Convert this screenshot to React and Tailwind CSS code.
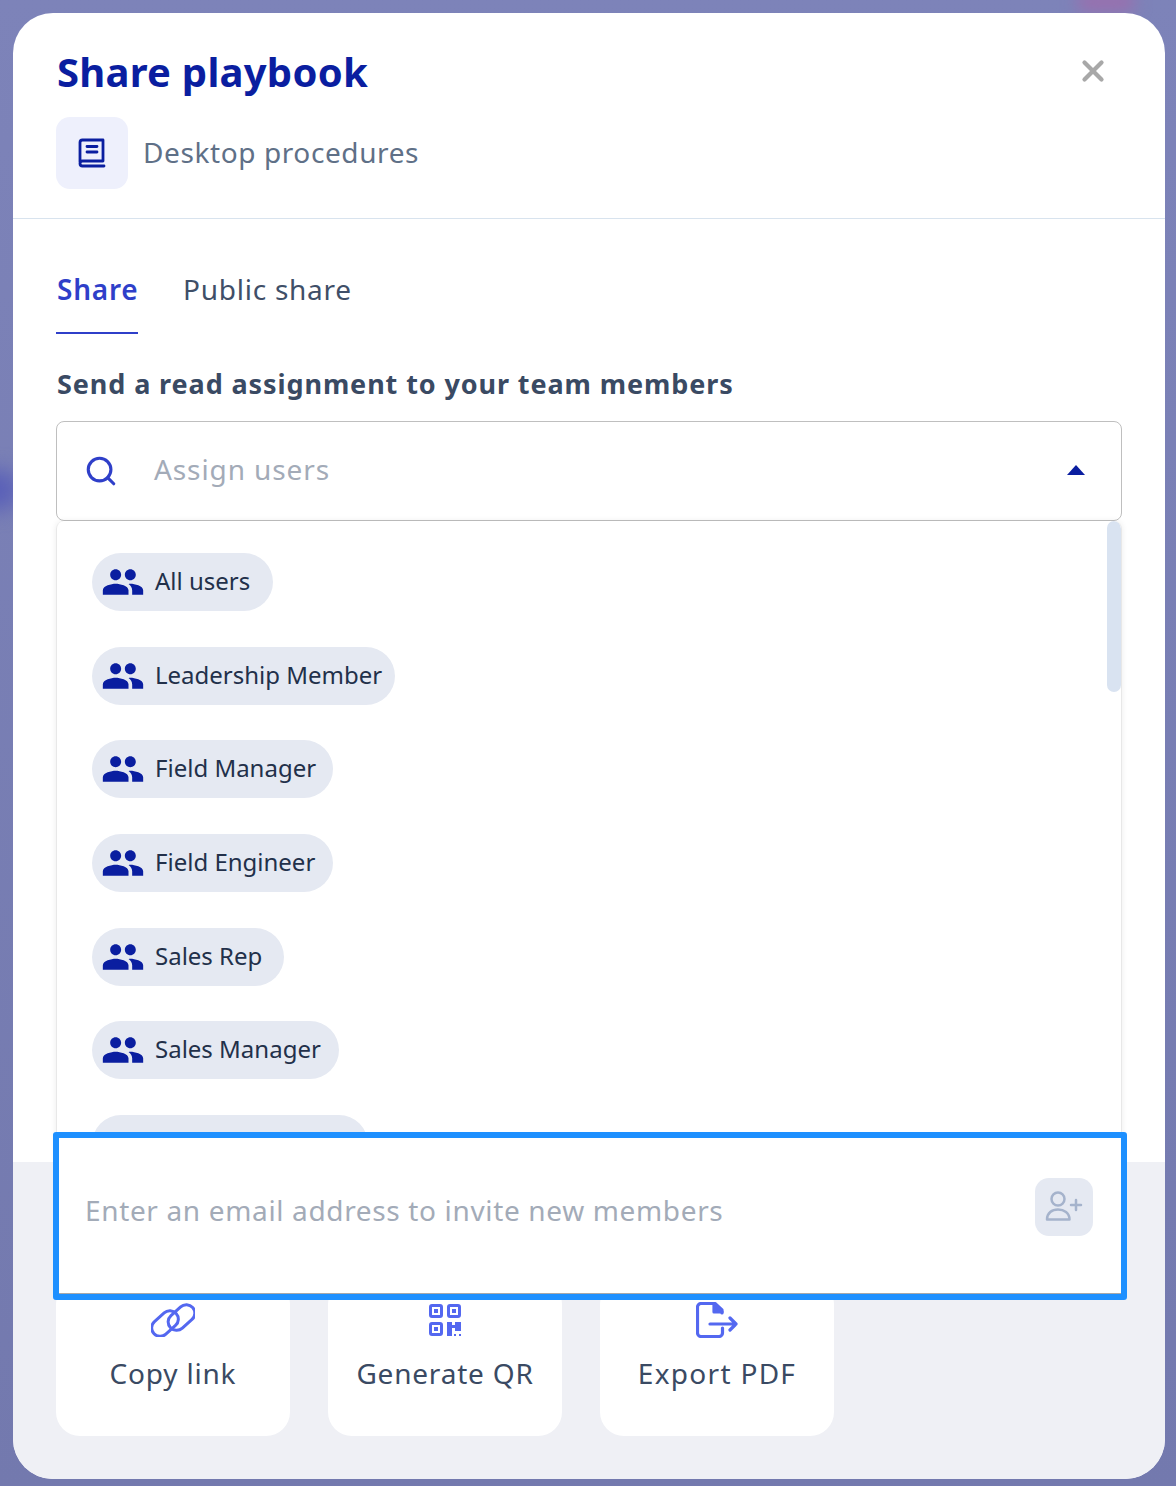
import { Search, X } from "lucide-react";

const font = { fontFamily: '"Noto Sans", sans-serif' };

const groups = [
  { name: "All users", width: "w-[181px]" },
  { name: "Leadership Member", width: "w-[303px]" },
  { name: "Field Manager", width: "w-[241px]" },
  { name: "Field Engineer", width: "w-[241px]" },
  { name: "Sales Rep", width: "w-[192px]" },
  { name: "Sales Manager", width: "w-[247px]" },
];

function PeopleIcon() {
  return (
    <svg width="44" height="44" viewBox="0 0 24 24" fill="#0a1ea0" className="shrink-0">
      <path d="M16 11c1.66 0 2.99-1.34 2.99-3S17.66 5 16 5c-1.66 0-3 1.34-3 3s1.34 3 3 3zm-8 0c1.66 0 2.99-1.34 2.99-3S9.66 5 8 5C6.34 5 5 6.34 5 8s1.34 3 3 3zm0 2c-2.33 0-7 1.17-7 3.5V19h14v-2.5c0-2.33-4.67-3.5-7-3.5zm8 0c-.29 0-.62.02-.97.05 1.16.84 1.97 1.97 1.97 3.45V19h6v-2.5c0-2.33-4.67-3.5-7-3.5z" />
    </svg>
  );
}

function BookIcon() {
  return (
    <svg width="28" height="30" viewBox="0 0 28 30" fill="none" stroke="#0a1ea0" strokeWidth="2.8" strokeLinejoin="round" strokeLinecap="round">
      <path d="M2 24V4.500A2.500 2.500 0 0 1 4.500 2H25v21H4.500A2.500 2.500 0 0 0 2 25.500 2.500 2.500 0 0 0 4.500 28H26" />
      <path d="M9 8.500h10M9 14h10" />
    </svg>
  );
}

function LinkIcon() {
  return (
    <svg width="44" height="34" viewBox="0 0 44 34" fill="none" stroke="#5468f0" strokeWidth="3">
      <rect x="-1" y="12" width="30" height="17" rx="8.500" transform="rotate(-42 14 20.500)" />
      <rect x="15.500" y="6" width="30" height="17" rx="8.500" transform="rotate(-42 30.500 14.500)" />
    </svg>
  );
}

function QrIcon() {
  return (
    <svg width="32" height="32" viewBox="0 0 32 32" fill="#5468f0">
      <path fillRule="evenodd" d="M3 0h8a3 3 0 0 1 3 3v8a3 3 0 0 1-3 3H3a3 3 0 0 1-3-3V3a3 3 0 0 1 3-3zm0 3v8h8V3zM21 0h8a3 3 0 0 1 3 3v8a3 3 0 0 1-3 3h-8a3 3 0 0 1-3-3V3a3 3 0 0 1 3-3zm0 3v8h8V3zM3 18h8a3 3 0 0 1 3 3v8a3 3 0 0 1-3 3H3a3 3 0 0 1-3-3v-8a3 3 0 0 1 3-3zm0 3v8h8v-8z" />
      <rect x="5" y="5" width="4" height="4" />
      <rect x="23" y="5" width="4" height="4" />
      <rect x="5" y="23" width="4" height="4" />
      <path d="M18 18h5v3h3v-3h6v9h-6v-3h-3v8h-5z" />
      <rect x="25" y="30" width="2" height="2" />
      <rect x="30" y="30" width="2" height="2" />
    </svg>
  );
}

function ExportIcon() {
  return (
    <svg width="42" height="36" viewBox="0 0 42 36" fill="none" stroke="#5468f0" strokeWidth="3.200" strokeLinecap="round" strokeLinejoin="round">
      <path d="M26 11V8l-7-6.500H5A3.500 3.500 0 0 0 1.500 5v26A3.500 3.500 0 0 0 5 34.500h18a3.500 3.500 0 0 0 3.500-3.500v-5" />
      <path d="M18 2v8h8z" fill="#5468f0" />
      <path d="M14 22h26M34 16l6 6-6 6" />
    </svg>
  );
}

function InviteIcon() {
  return (
    <svg width="38" height="38" viewBox="0 0 38 38" fill="none" stroke="#a5b3cc" strokeWidth="2.500" strokeLinecap="round" strokeLinejoin="round">
      <circle cx="13" cy="11" r="6.500" />
      <path d="M2 31.500c0-6.500 5-10 11-10s11.500 3.500 11.500 10z" />
      <path d="M26 17h10M31 12v10" />
    </svg>
  );
}

function ActionCard({ icon, label, spacing }) {
  return (
    <button className="flex h-[156px] w-[234px] flex-col items-center justify-end rounded-[24px] bg-white pb-[42px]">
      <span className="mb-[14px] flex h-[40px] items-center">{icon}</span>
      <span className={`-translate-y-[1px] text-[28px] leading-[40px] text-[#3a4a63] ${spacing}`}>{label}</span>
    </button>
  );
}

export default function App() {
  return (
    <div className="relative h-[1486px] w-[1176px] overflow-hidden bg-gradient-to-b from-[#7d83b9] to-[#7379ae] p-[13px] pb-[7px]" style={font}>
      <div className="absolute left-[-30px] top-[470px] h-[40px] w-[50px] rounded-full bg-[#5a60b8] blur-[10px]" />
      <div className="absolute right-[40px] top-[-8px] h-[20px] w-[60px] rounded-full bg-[#9a6fae] blur-[8px]" />
      <div className="relative flex h-[1466px] w-[1152px] flex-col overflow-hidden rounded-[40px] bg-white">
        <header className="flex h-[206px] shrink-0 flex-col border-b border-[#d8e3ee] pl-[43px] pr-[55px] pt-[30px]">
          <div className="flex h-[58px] items-start justify-between">
            <h1 className="pl-[1px] text-[40px] font-bold leading-[58px] tracking-[0.25px] text-[#0a1ea0]">Share playbook</h1>
            <X size={34} strokeWidth={3} className="mt-[11px] text-[#a8a8a8]" />
          </div>
          <div className="mt-[16px] flex items-center gap-[15px]">
            <div className="flex h-[72px] w-[72px] items-center justify-center rounded-[14px] bg-[#eef0fc]">
              <BookIcon />
            </div>
            <span className="-translate-y-[1px] text-[28px] leading-[40px] tracking-[0.6px] text-[#5f7087]">Desktop procedures</span>
          </div>
        </header>

        <div className="flex min-h-0 flex-1 flex-col px-[43px]">
          <nav className="mt-[46px] flex h-[69px] shrink-0 gap-[45px]">
            <div className="h-[69px] w-[82px] border-b-2 border-[#2f3fc9] pl-[1px] text-[28px] font-semibold leading-[49px] tracking-[0.75px] text-[#2f3fc9]">Share</div>
            <div className="text-[28px] leading-[49px] tracking-[0.75px] text-[#3f4f68]">Public share</div>
          </nav>
          <h2 className="mt-[31px] pl-[1px] text-[27px] font-bold leading-[38px] tracking-[0.9px] text-[#3a4a63]">Send a read assignment to your team members</h2>
          <div className="mt-[18px] flex h-[100px] shrink-0 items-center rounded-[8px] border border-[#bfbfbf] pl-[27px] pr-[36px]">
            <Search size={34} strokeWidth={2.2} className="shrink-0 text-[#2f3fc9]" />
            <span className="ml-[36px] flex-1 -translate-y-[2px] text-[28px] tracking-[0.9px] text-[#a3abb8]">Assign users</span>
            <span className="h-0 w-0 -translate-y-[1px] border-x-[9px] border-b-[10px] border-x-transparent border-b-[#0a1ea0]" />
          </div>
          <div className="relative flex min-h-0 flex-1 flex-col gap-[35.670px] overflow-hidden rounded-t-[8px] border-x border-[#e8e8e8] pl-[35px] pt-[32px] shadow-[0_0_6px_rgba(0,0,0,0.08)]">
            {groups.map((group) => (
              <div key={group.name} className={`flex h-[58px] shrink-0 items-center gap-[10px] rounded-full bg-[#e5e9f2] pl-[9px] ${group.width}`}>
                <PeopleIcon />
                <span className="-translate-y-[1px] whitespace-nowrap text-[24px] text-[#22304a]">{group.name}</span>
              </div>
            ))}
            <div className="h-[58px] w-[276px] shrink-0 rounded-full bg-[#e5e9f2]" />
            <div className="absolute right-0 top-0 h-[171px] w-[14px] rounded-full bg-[#d9e3f1]" />
          </div>
        </div>

        <footer className="h-[317px] shrink-0 bg-[#eff0f5] px-[43px]">
          <div className="relative z-10 -ml-[3px] -mr-[5px] -mt-[30px] flex h-[168px] items-center justify-between rounded-[3px] border-[6px] border-[#1e90ff] bg-white pb-[18px] pl-[26px] pr-[28px] shadow-[inset_0_-1px_0_#a8a8a8]">
            <span className="mt-[6px] text-[28px] tracking-[0.65px] text-[#a3abb8]">Enter an email address to invite new members</span>
            <div className="flex h-[58px] w-[58px] items-center justify-center rounded-[14px] bg-[#e5e9f2]">
              <InviteIcon />
            </div>
          </div>
          <div className="-mt-[20px] flex gap-[38px]">
            <ActionCard icon={<LinkIcon />} label="Copy link" spacing="tracking-[0.8px]" />
            <ActionCard icon={<QrIcon />} label="Generate QR" spacing="tracking-[0.8px]" />
            <ActionCard icon={<ExportIcon />} label="Export PDF" spacing="tracking-[1.300px]" />
          </div>
        </footer>
      </div>
    </div>
  );
}
